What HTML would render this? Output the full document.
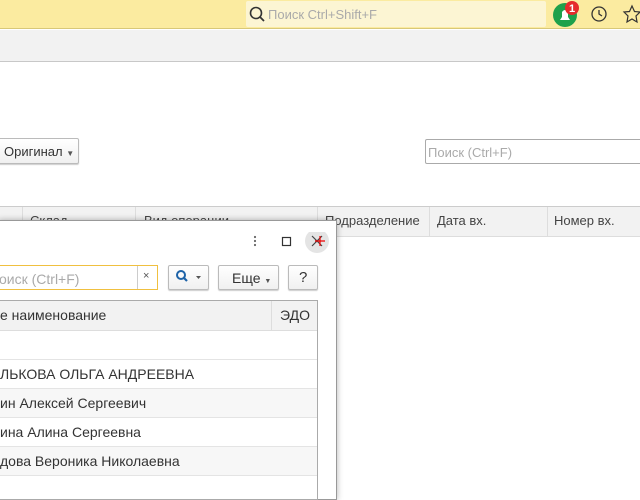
<!DOCTYPE html>
<html><head><meta charset="utf-8"><style>
*{box-sizing:border-box;margin:0;padding:0}
body{width:640px;height:480px;overflow:hidden;position:relative;background:#fff;font-family:"Liberation Sans",Arial,sans-serif;font-size:13px;color:#333}
.a{position:absolute}
</style></head><body>
<div class="a" style="left:0;top:0;width:640px;height:29px;background:#fbeba0;border-bottom:1px solid #d8c878"></div>
<div class="a" style="left:246px;top:1px;width:300px;height:26px;background:#fcf5d3;border-radius:2px"></div>
<svg class="a" style="left:248px;top:5px" width="18" height="18"><circle cx="8" cy="8" r="5.5" fill="none" stroke="#333" stroke-width="1.6"/><line x1="12" y1="12" x2="16" y2="16" stroke="#333" stroke-width="1.8"/></svg>
<div class="a" style="left:268px;top:7px;color:#aaa;font-size:13px">Поиск Ctrl+Shift+F</div>
<svg class="a" style="left:552px;top:0" width="88" height="30">
<circle cx="13" cy="15" r="12" fill="#1ea14b"/>
<path d="M8 20 L18 20 L16 17 L16 12 Q13 8 10 12 L10 17 Z" fill="#fff"/>
<circle cx="20" cy="8" r="7" fill="#e52b2b"/>
<text x="20" y="12" fill="#fff" font-size="11" font-weight="bold" text-anchor="middle" font-family="Liberation Sans">1</text>
<circle cx="47" cy="14" r="7" fill="none" stroke="#333" stroke-width="1.3"/>
<path d="M47 10 L47 14 L50 16" fill="none" stroke="#333" stroke-width="1.3"/>
<path d="M80 6 L82.5 11.5 L88 12 L84 16 L85 22 L80 19 L75 22 L76 16 L72 12 L77.5 11.5 Z" fill="none" stroke="#333" stroke-width="1.2"/>
</svg>
<div class="a" style="left:0;top:30px;width:640px;height:32px;background:#f2f2f2;border-bottom:1px solid #c8c8c8"></div>
<div class="a" style="left:-2px;top:138px;width:81px;height:26px;border:1px solid #bbb;border-radius:2px;background:linear-gradient(#fff,#f0f0f0);box-shadow:0 1px 1px #ccc;padding:5px 0 0 5px">Оригинал <span style="font-size:8px;color:#555">▼</span></div>
<div class="a" style="left:425px;top:139px;width:220px;height:25px;border:1px solid #aaa;border-radius:2px;padding:5px 2px;color:#aaa">Поиск (Ctrl+F)</div>
<div class="a" style="left:0;top:206px;width:640px;height:31px;background:#f2f2f2;border-top:1px solid #ccc;border-bottom:1px solid #ddd"></div>
<div class="a" style="left:22px;top:207px;width:1px;height:30px;background:#ddd"></div>
<div class="a" style="left:135px;top:207px;width:1px;height:30px;background:#ddd"></div>
<div class="a" style="left:317px;top:207px;width:1px;height:30px;background:#ddd"></div>
<div class="a" style="left:429px;top:207px;width:1px;height:30px;background:#ddd"></div>
<div class="a" style="left:547px;top:207px;width:1px;height:30px;background:#ddd"></div>
<div class="a" style="left:325px;top:213px;color:#444">Подразделение</div>
<div class="a" style="left:437px;top:213px;color:#444">Дата вх.</div>
<div class="a" style="left:554px;top:213px;color:#444">Номер вх.</div>
<div class="a" style="left:30px;top:213px;color:#444">Склад</div>
<div class="a" style="left:144px;top:213px;color:#444">Вид операции</div>
<!-- dialog -->
<div class="a" style="left:-2px;top:220px;width:339px;height:280px;background:#fff;border:1px solid #999;box-shadow:0 0 6px rgba(0,0,0,.3)"></div>
<svg class="a" style="left:248px;top:232px" width="84" height="22">
<circle cx="7" cy="5" r="1.1" fill="#666"/><circle cx="7" cy="9" r="1.1" fill="#666"/><circle cx="7" cy="13" r="1.1" fill="#666"/>
<rect x="34.5" y="5.5" width="8" height="8" fill="none" stroke="#333" stroke-width="1.2"/>
<circle cx="69" cy="9" r="12" fill="#e4e4e4"/>
<path d="M64 4 L74 14 M74 4 L64 14" stroke="#444" stroke-width="1.2"/>
<path d="M67 9 L77 9 M72 4 L72 14" stroke="#e00" stroke-width="1.2"/>
</svg>
<div class="a" style="left:-2px;top:265px;width:160px;height:25px;border:1px solid #f0c040;padding:5px 0 0 0;color:#aaa;font-size:14px">оиск (Ctrl+F)</div>
<div class="a" style="left:137px;top:266px;width:1px;height:23px;background:#ccc"></div>
<div class="a" style="left:143px;top:270px;color:#555;font-size:11px">×</div>
<div class="a" style="left:168px;top:265px;width:41px;height:25px;border:1px solid #bbb;border-radius:2px;background:linear-gradient(#fff,#f0f0f0);box-shadow:0 1px 1px #ccc"></div>
<svg class="a" style="left:175px;top:269px" width="30" height="16"><circle cx="6" cy="6" r="4" fill="none" stroke="#1d63a8" stroke-width="2"/><line x1="9" y1="9" x2="12" y2="12" stroke="#1d63a8" stroke-width="2.2"/><path d="M21 7 L26 7 L23.5 10 Z" fill="#555"/></svg>
<div class="a" style="left:218px;top:265px;width:61px;height:25px;border:1px solid #bbb;border-radius:2px;background:linear-gradient(#fff,#f0f0f0);box-shadow:0 1px 1px #ccc;padding:4px 0 0 13px;font-size:14px">Еще <span style="font-size:7px;color:#555">▼</span></div>
<div class="a" style="left:288px;top:265px;width:30px;height:25px;border:1px solid #bbb;border-radius:2px;background:linear-gradient(#fff,#f0f0f0);box-shadow:0 1px 1px #ccc;padding:3px 0 0 10px;font-size:15px">?</div>
<div class="a" style="left:-2px;top:300px;width:320px;height:200px;border:1px solid #aaa"></div>
<div class="a" style="left:-1px;top:301px;width:318px;height:30px;background:#f2f2f2;border-bottom:1px solid #ddd"></div>
<div class="a" style="left:271px;top:301px;width:1px;height:30px;background:#ddd"></div>
<div class="a" style="left:0;top:307px;font-size:14px">е наименование</div>
<div class="a" style="left:280px;top:307px;font-size:14px">ЭДО</div>
<div class="a" style="left:-1px;top:331px;width:318px;height:29px;border-bottom:1px solid #e4e4e4"></div>
<div class="a" style="left:-1px;top:360px;width:318px;height:29px;border-bottom:1px solid #e4e4e4"></div>
<div class="a" style="left:-1px;top:389px;width:318px;height:29px;background:#f7f7f7;border-bottom:1px solid #e4e4e4"></div>
<div class="a" style="left:-1px;top:418px;width:318px;height:29px;border-bottom:1px solid #e4e4e4"></div>
<div class="a" style="left:-1px;top:447px;width:318px;height:29px;background:#f7f7f7;border-bottom:1px solid #e4e4e4"></div>
<div class="a" style="left:0;top:366px;font-size:14px">ЛЬКОВА ОЛЬГА АНДРЕЕВНА</div>
<div class="a" style="left:0;top:395px;font-size:14px">ин Алексей Сергеевич</div>
<div class="a" style="left:0;top:424px;font-size:14px">ина Алина Сергеевна</div>
<div class="a" style="left:0;top:453px;font-size:14px">дова Вероника Николаевна</div>
</body></html>
